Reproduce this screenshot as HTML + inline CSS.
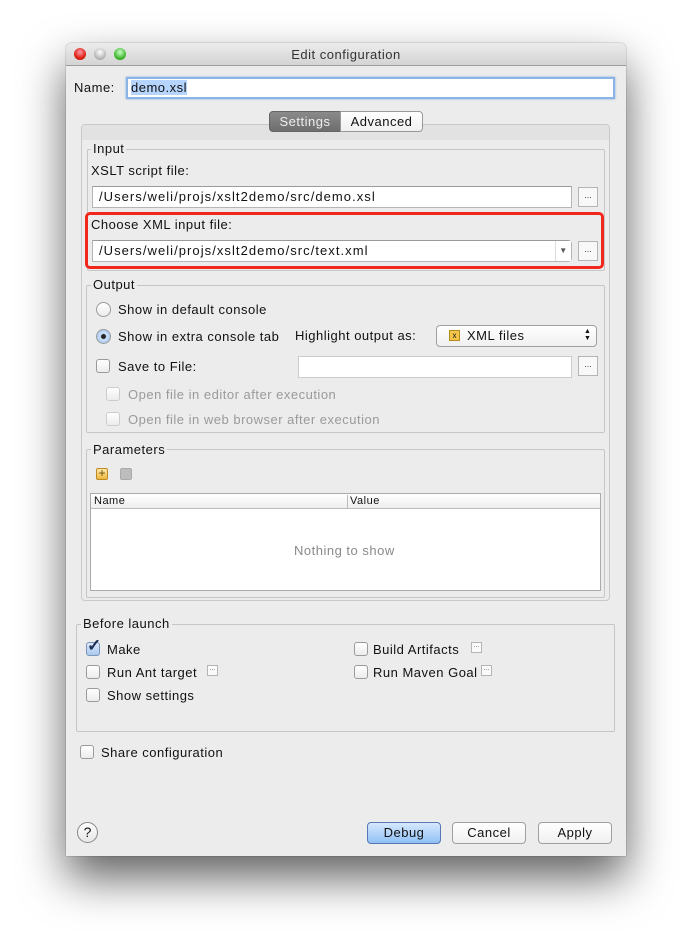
<!DOCTYPE html>
<html><head><meta charset="utf-8">
<style>
*{box-sizing:border-box;margin:0;padding:0}
body{width:692px;height:945px;background:#fff;position:relative;overflow:hidden;font-family:"Liberation Sans",sans-serif;font-size:13px;color:#111;letter-spacing:0.5px}
.a{position:absolute;white-space:nowrap}
.win{left:66px;top:43px;width:560px;height:813px;background:#ececec;box-shadow:0 22px 45px rgba(0,0,0,.62),0 0 1px rgba(0,0,0,.6);border-radius:5px 5px 0 0}
.title{left:0;top:0;width:560px;height:23px;background:linear-gradient(#ececec,#d4d4d4);border-bottom:1px solid #9e9e9e;border-radius:5px 5px 0 0;text-align:center;line-height:23px;color:#333}
.dot{width:12px;height:12px;border-radius:50%;top:5px}
.tf{background:#fff;border:1px solid #b5b5b5;border-top-color:#9a9a9a;height:22px;line-height:20px;padding-left:6px;white-space:nowrap}
.path{letter-spacing:1.05px}
.btn3{width:20px;height:20px;border:1px solid #b5b5b5;background:#f8f8f8;text-align:center;font-size:9px;line-height:14px;color:#444;letter-spacing:0}
.fs{border:1px solid #c6c6c6;border-radius:2px}
.lg{background:#ececec;padding:0 2px;line-height:14px}
.cb{width:14px;height:14px;border:1px solid #9a9a9a;border-radius:3px;background:linear-gradient(#fff,#ececec)}
.rd{width:15px;height:15px;border:1px solid #9a9a9a;border-radius:50%;background:linear-gradient(#fff,#ececec)}
.dis{color:#9a9a9a}
.sm{width:11px;height:11px;border:1px solid #b5b5b5;background:#fafafa;font-size:7px;text-align:center;line-height:5px;color:#555;letter-spacing:0}
.pb{height:22px;border:1px solid #a0a0a0;border-radius:4px;background:linear-gradient(#fff,#f0f0f0);text-align:center;line-height:20px}
</style></head><body>
<div class="a win">
 <div class="a title">Edit configuration</div>
 <div class="a dot" style="left:8px;background:radial-gradient(circle at 50% 35%,#f9a,#d21 60%,#a00)"></div>
 <div class="a dot" style="left:28px;background:radial-gradient(circle at 50% 35%,#fff,#bbb 60%,#999)"></div>
 <div class="a dot" style="left:48px;background:radial-gradient(circle at 50% 35%,#cfc,#4b3 60%,#270)"></div>
</div>
<div class="a" style="left:74px;top:80px">Name:</div>
<div class="a tf" style="left:126px;top:77px;width:489px;border:2px solid #8ab4e6;box-shadow:0 0 2px #7aa7e0;line-height:18px;padding-left:3px"><span style="background:#b5d5ff">demo.xsl</span></div>

<div class="a" style="left:81px;top:124px;width:529px;height:477px;border:1px solid #c9c9c9;border-radius:4px;background:#ececec"></div>
<div class="a" style="left:82px;top:125px;width:527px;height:15px;background:#e2e2e2;border-radius:4px 4px 0 0"></div>
<div class="a" style="left:269px;top:111px;width:72px;height:21px;background:linear-gradient(#8a8a8a,#6e6e6e);border:1px solid #666;border-radius:4px 0 0 4px;color:#eee;text-align:center;line-height:19px">Settings</div>
<div class="a" style="left:340px;top:111px;width:83px;height:21px;background:linear-gradient(#fff,#f0f0f0);border:1px solid #999;border-radius:0 4px 4px 0;text-align:center;line-height:19px">Advanced</div>

<div class="a fs" style="left:87px;top:149px;width:518px;height:122px"></div>
<div class="a lg" style="left:91px;top:142px">Input</div>
<div class="a" style="left:91px;top:163px">XSLT script file:</div>
<div class="a tf path" style="left:92px;top:186px;width:480px">/Users/weli/projs/xslt2demo/src/demo.xsl</div>
<div class="a btn3" style="left:578px;top:187px">...</div>
<div class="a" style="left:85px;top:212px;width:519px;height:57px;border:3px solid #f2271b;border-radius:5px"></div>
<div class="a" style="left:91px;top:217px">Choose XML input file:</div>
<div class="a tf path" style="left:92px;top:240px;width:480px;border-radius:0 4px 4px 0">/Users/weli/projs/xslt2demo/src/text.xml</div>
<div class="a" style="left:555px;top:241px;width:16px;height:20px;border-left:1px solid #ddd;font-size:8px;color:#555;text-align:center;line-height:20px;background:#fff">▼</div>
<div class="a btn3" style="left:578px;top:241px">...</div>

<div class="a fs" style="left:86px;top:285px;width:519px;height:148px"></div>
<div class="a lg" style="left:91px;top:278px">Output</div>
<div class="a rd" style="left:96px;top:302px"></div>
<div class="a" style="left:118px;top:302px">Show in default console</div>
<div class="a rd" style="left:96px;top:329px;background:radial-gradient(circle,#222 2px,#cfe3fb 3px,#8fb8ea)"></div>
<div class="a" style="left:118px;top:329px">Show in extra console tab</div>
<div class="a" style="left:295px;top:328px">Highlight output as:</div>
<div class="a pb" style="left:436px;top:325px;width:161px;text-align:left;padding-left:30px">XML files</div>
<div class="a" style="left:449px;top:330px;width:11px;height:11px;background:#f3c54a;border:1px solid #b48a1a;font-size:8px;line-height:9px;text-align:center;letter-spacing:0">x</div>
<div class="a" style="left:584px;top:328px;font-size:7px;line-height:7px">▲<br>▼</div>
<div class="a cb" style="left:96px;top:359px"></div>
<div class="a" style="left:118px;top:359px">Save to File:</div>
<div class="a tf" style="left:298px;top:356px;width:274px;border-color:#ccc"></div>
<div class="a btn3" style="left:578px;top:356px">...</div>
<div class="a cb" style="left:106px;top:387px;border-color:#ccc"></div>
<div class="a dis" style="left:128px;top:387px">Open file in editor after execution</div>
<div class="a cb" style="left:106px;top:412px;border-color:#ccc"></div>
<div class="a dis" style="left:128px;top:412px">Open file in web browser after execution</div>

<div class="a fs" style="left:86px;top:449px;width:519px;height:149px"></div>
<div class="a lg" style="left:91px;top:443px">Parameters</div>
<div class="a" style="left:96px;top:468px;width:12px;height:12px;background:linear-gradient(#fde8a8,#f0b940);border:1px solid #c08a20;border-radius:2px;font-size:12px;line-height:9px;text-align:center;color:#6a4a00;letter-spacing:0">+</div>
<div class="a" style="left:120px;top:468px;width:12px;height:12px;background:#bdbdbd;border:1px solid #aaa;border-radius:2px"></div>
<div class="a" style="left:90px;top:493px;width:511px;height:98px;border:1px solid #aaa;background:#fff"></div>
<div class="a" style="left:91px;top:494px;width:509px;height:15px;background:linear-gradient(#fff,#eee);border-bottom:1px solid #bbb;font-size:11px;line-height:14px;padding-left:3px">Name</div>
<div class="a" style="left:347px;top:495px;height:13px;border-left:1px solid #bbb;font-size:11px;line-height:13px;padding-left:2px">Value</div>
<div class="a" style="left:294px;top:543px;color:#8a8a8a">Nothing to show</div>

<div class="a fs" style="left:76px;top:624px;width:539px;height:108px"></div>
<div class="a lg" style="left:81px;top:617px">Before launch</div>
<div class="a cb" style="left:86px;top:642px;background:linear-gradient(#dbe9fb,#a8c8f0);border-color:#7b95b8"></div>
<div class="a" style="left:87px;top:636px;font-size:17px;font-weight:bold;color:#1c2f55">✓</div>
<div class="a" style="left:107px;top:642px">Make</div>
<div class="a cb" style="left:86px;top:665px"></div>
<div class="a" style="left:107px;top:665px">Run Ant target</div>
<div class="a sm" style="left:207px;top:665px">...</div>
<div class="a cb" style="left:354px;top:642px"></div>
<div class="a" style="left:373px;top:642px">Build Artifacts</div>
<div class="a sm" style="left:471px;top:642px">...</div>
<div class="a cb" style="left:86px;top:688px"></div>
<div class="a" style="left:107px;top:688px">Show settings</div>
<div class="a cb" style="left:354px;top:665px"></div>
<div class="a" style="left:373px;top:665px">Run Maven Goal</div>
<div class="a sm" style="left:481px;top:665px">...</div>

<div class="a cb" style="left:80px;top:745px"></div>
<div class="a" style="left:101px;top:745px">Share configuration</div>

<div class="a" style="left:77px;top:822px;width:21px;height:21px;border:1px solid #888;border-radius:50%;background:linear-gradient(#fff,#e6e6e6);text-align:center;line-height:19px;font-size:14px;letter-spacing:0">?</div>
<div class="a pb" style="left:367px;top:822px;width:74px;background:linear-gradient(#d6e8fd,#8fc0f5);border-color:#5a77b5">Debug</div>
<div class="a pb" style="left:452px;top:822px;width:74px">Cancel</div>
<div class="a pb" style="left:538px;top:822px;width:74px">Apply</div>
</body></html>
